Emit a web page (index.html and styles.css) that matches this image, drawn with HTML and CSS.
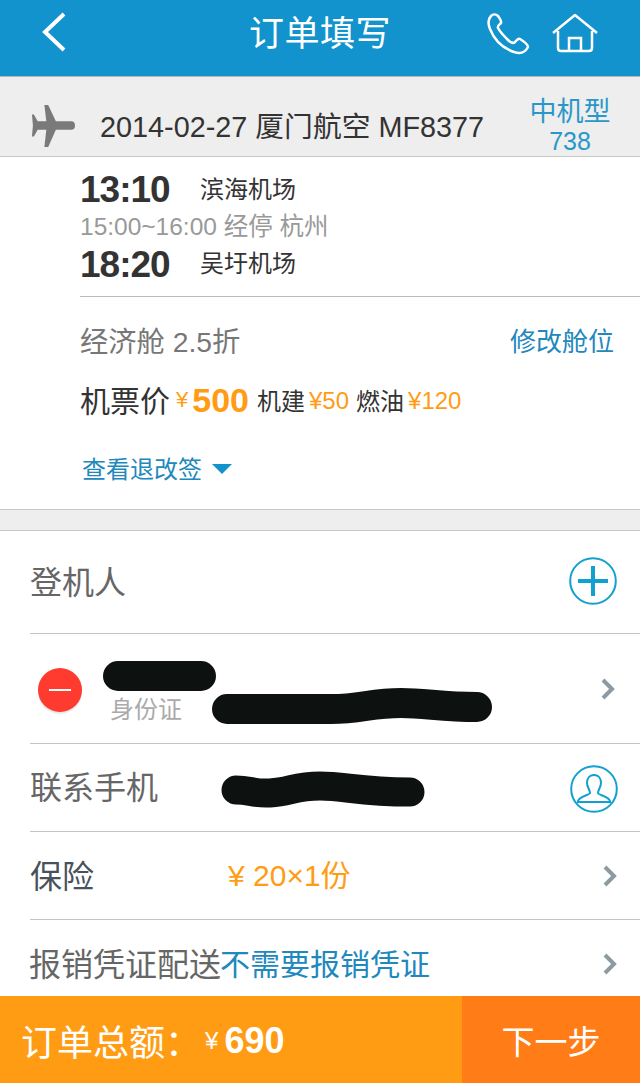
FILE: index.html

```html
<!DOCTYPE html>
<html lang="zh-CN">
<head>
  <meta charset="UTF-8" />
  <title>订单填写</title>
  <link rel="stylesheet" href="styles.css">
</head>
<body>
  <header class="topbar">
    <svg class="back" width="26" height="40" viewBox="0 0 26 40"><path d="M23 2 L4 20 L23 38" /></svg>
    <h1>订单填写</h1>
    <svg class="phone" width="44" height="42" viewBox="0 0 44 42"><path d="M4 3 C1 6 1 11 3 16 C7 26 15 35 27 39 C33 41 38 40 41 34 C41 31 36 28 33 26 C31 25 30 27 28 29 C26 31 24 30 21 27 C17 23 13 19 11 15 C10 13 12 12 14 10 C15 8 13 6 11 3 C9 1 6 1 4 3 Z" /></svg>
    <svg class="home" width="46" height="40" viewBox="0 0 46 40"><path d="M1 19 L23 1 L45 19 M6 17 V34 Q6 37 9 37 H37 Q40 37 40 34 V17 M17 37 V24 H29 V37" /></svg>
  </header>

  <section class="flight-head">
    <svg class="plane" width="44" height="44" viewBox="0 0 46 44"><path d="M14 0 H18 L26 17 H42 Q46 17 46 21.500 Q46 26 42 26 H26 L18 44 H14 L16 26 H7 L3 33 H1 L2 21.500 L1 10 H3 L7 17 H16 Z" /></svg>
    <span class="flight-name">2014-02-27 厦门航空 MF8377</span>
    <div class="plane-type"><span class="type-name">中机型</span><span class="type-code">738</span></div>
  </section>

  <section class="flight-card">
    <div class="times">
      <div class="stop"><b>13:10</b><span>滨海机场</span></div>
      <div class="via">15:00~16:00 经停 杭州</div>
      <div class="stop"><b>18:20</b><span>吴圩机场</span></div>
    </div>
    <div class="cabin">
      <span class="cabin-name">经济舱 2.5折</span>
      <a class="link change">修改舱位</a>
    </div>
    <div class="price">
      <span class="price-label">机票价</span>
      <span class="yen">¥</span><b>500</b>
      <span class="fee">机建</span><span class="fee-num">¥50</span>
      <span class="fee">燃油</span><span class="fee-num">¥120</span>
    </div>
    <div class="rules"><a class="link">查看退改签</a><i class="caret"></i></div>
  </section>

  <div class="gap"></div>

  <section class="form">
    <div class="row row-add">
      <span class="label">登机人</span>
      <svg class="round-icon" width="48" height="48" viewBox="0 0 48 48"><circle cx="24" cy="24" r="22.800" /><path class="thick" d="M9 24 H39 M24 9 V39" /></svg>
    </div>
    <div class="row row-person">
      <div class="remove"><i></i></div>
      <div class="person">
        <svg class="scribble" width="114" height="32" viewBox="0 0 114 32"><path d="M15 15 H98" stroke-width="30" /></svg>
        <div class="id-line">
          <span class="id-type">身份证</span>
          <svg class="scribble" width="282" height="38" viewBox="0 0 282 38"><path d="M16 21 H120 C150 21 160 15 190 15 C215 15 230 19 266 19" stroke-width="30" /></svg>
        </div>
      </div>
      <svg class="arrow" width="14" height="22" viewBox="0 0 14 22"><path d="M2 2 L11 11 L2 20" /></svg>
    </div>
    <div class="row row-phone">
      <span class="label">联系手机</span>
      <svg class="scribble phone-num" width="206" height="42" viewBox="0 0 206 42"><path d="M16 20 C30 20 34 24 50 23 C70 22 75 16 100 16 C125 16 140 22 190 22" stroke-width="29" /></svg>
      <svg class="round-icon contact" width="48" height="48" viewBox="0 0 48 48"><circle cx="24" cy="24" r="22.800" /><path d="M24 10 C19 10 17 14 17 18 C17 22 20 25 20 28 C20 30 10 31 8 36 V37 H40 V36 C38 31 28 30 28 28 C28 25 31 22 31 18 C31 14 29 10 24 10 Z" /></svg>
    </div>
    <div class="row row-insure">
      <span class="label dark">保险</span>
      <span class="insure-val">¥ 20×1份</span>
      <svg class="arrow" width="14" height="22" viewBox="0 0 14 22"><path d="M2 2 L11 11 L2 20" /></svg>
    </div>
    <div class="row row-invoice">
      <span class="label">报销凭证配送</span><span class="invoice-val">不需要报销凭证</span>
      <svg class="arrow" width="14" height="22" viewBox="0 0 14 22"><path d="M2 2 L11 11 L2 20" /></svg>
    </div>
  </section>

  <footer class="bottombar">
    <div class="total">订单总额：<span class="total-yen">¥</span><b>690</b></div>
    <div class="next">下一步</div>
  </footer>
</body>
</html>
```

FILE: styles.css

```css
* { box-sizing: border-box; }
html, body { margin: 0; padding: 0; }
body {
  width: 640px; height: 1083px; overflow: hidden;
  display: flex; flex-direction: column;
  font-family: "Liberation Sans", "Noto Sans CJK SC", sans-serif;
  background: #fff; color: #333;
}
svg { display: block; flex: none; fill: none; }

.topbar { height: 77px; flex: none; background: #1293cd; border-bottom: 1px solid #b5b5b5; display: flex; align-items: center; padding-left: 41px; }
.topbar svg { stroke: #fff; }
.back { stroke-width: 4; margin-top: -13px; }
.topbar h1 { margin: -9px 0 0 182px; width: 140px; font-size: 35px; letter-spacing: 0.500px; line-height: 40px; font-weight: 400; color: #fff; white-space: nowrap; }
.phone { stroke-width: 2.500; margin: -9px 0 0 98px; }
.home { stroke-width: 2.500; margin: -9px 0 0 21px; }

.flight-head { height: 80px; flex: none; background: #eee; border-bottom: 1px solid #c8c8c8; display: flex; align-items: flex-end; padding-left: 31px; }
.plane { fill: #7a7a7a; margin-bottom: 8px; }
.flight-name { font-size: 28.800px; line-height: 32px; margin: 0 0 13px 25px; color: #333; white-space: nowrap; }
.plane-type { margin-left: auto; width: 82px; margin-right: 29px; display: flex; flex-direction: column; align-items: center; color: #2a97c9; }
.type-name { font-size: 27px; line-height: 30px; white-space: nowrap; margin-bottom: 1px; }
.type-code { font-size: 25px; line-height: 26px; margin-bottom: 2px; }

.flight-card { height: 352px; flex: none; padding-left: 80px; }
.times { height: 140px; border-bottom: 1px solid #bbb; padding-top: 14px; }
.stop { display: flex; align-items: center; height: 38px; }
.stop b { width: 120px; font-size: 37px; letter-spacing: -1px; color: #333; }
.stop span { font-size: 24px; color: #333; padding-bottom: 5px; }
.via { font-size: 24.500px; line-height: 36px; color: #999; height: 36px; }
.stop + .via + .stop b { padding-top: 2px; }
.cabin { display: flex; justify-content: space-between; align-items: center; height: 38px; margin-top: 23px; padding-right: 26px; }
.cabin-name { font-size: 28.300px; color: #777; }
.link { color: #2188bd; }
.change { font-size: 26px; }
.price { display: flex; align-items: center; height: 44px; margin-top: 19px; white-space: nowrap; }
.price-label { font-size: 30px; color: #333; }
.price .yen { font-size: 22px; color: #ff9c14; margin-left: 6px; padding-top: 2px; }
.price b { font-size: 34px; color: #ff9c14; margin-left: 4px; padding-top: 2px; }
.fee { font-size: 24px; color: #333; margin-left: 8px; }
.fee + .fee-num { padding-top: 4px; }
.fee-num + .fee { margin-left: 7px; }
.fee-num { font-size: 24px; color: #ff9c14; margin-left: 4px; }
.rules { display: flex; align-items: center; height: 36px; margin-top: 28px; padding-left: 2px; font-size: 24px; }
.caret { width: 0; height: 0; margin: 4px 0 0 10px; border-left: 10px solid transparent; border-right: 10px solid transparent; border-top: 10px solid #1293cd; }

.gap { height: 22px; flex: none; background: #eee; border-top: 1px solid #c8c8c8; border-bottom: 1px solid #c8c8c8; }

.form { flex: 1; min-height: 0; overflow: hidden; padding-left: 30px; }
.row { display: flex; align-items: center; border-bottom: 1px solid #c4c4c4; padding-right: 23px; }
.row-add { height: 103px; }
.row-person { height: 110px; padding-left: 8px; padding-right: 25px; }
.row-phone { height: 88px; }
.row-insure { height: 88px; }
.row-invoice { height: 88px; border-bottom: 0; margin-left: -1px; }
.label { font-size: 32px; color: #666; white-space: nowrap; padding-bottom: 5px; }
.dark { color: #47525c; padding-bottom: 3px; }

.round-icon { stroke: #12a0d0; stroke-width: 2; margin-left: auto; }
.thick { stroke-width: 4; }
.row-add .round-icon { margin-bottom: 2px; }
.contact { margin: 2px -2px 0 144px; }
.arrow { stroke: #8d9aa1; stroke-width: 4; margin-left: auto; }

.remove { width: 44px; height: 44px; margin-top: 2px; border-radius: 50%; background: #ff3b30; box-shadow: 0 2px 1px #e8e8e8; display: flex; align-items: center; justify-content: center; flex: none; }
.remove i { width: 22px; height: 2px; background: #fff; display: block; }
.person { margin-left: 21px; padding-top: 10px; }
.scribble { stroke: #0d1211; stroke-linecap: round; stroke-linejoin: round; }
.id-line { display: flex; align-items: center; margin-top: -5px; }
.id-type { font-size: 24px; color: #aaa; margin-left: 7px; margin-right: 29px; white-space: nowrap; }
.phone-num { margin-left: 62px; margin-top: 6px; }
.insure-val { margin-left: 134px; font-size: 30px; color: #ff9c14; white-space: nowrap; padding-bottom: 5px; }
.invoice-val { font-size: 30px; color: #2188bd; white-space: nowrap; padding-bottom: 5px; margin-left: -1px; }

.bottombar { height: 87px; flex: none; display: flex; color: #fff; margin-top: -12px; }
.total { width: 462px; background: #ff9c14; display: flex; align-items: center; padding-left: 21px; font-size: 36px; white-space: nowrap; }
.total-yen { font-size: 24px; margin-left: 4px; padding-top: 2px; }
.total b { font-size: 36px; margin-left: 6px; padding-top: 3px; }
.next { flex: 1; background: #ff7c17; display: flex; align-items: center; justify-content: center; font-size: 33px; }
```
